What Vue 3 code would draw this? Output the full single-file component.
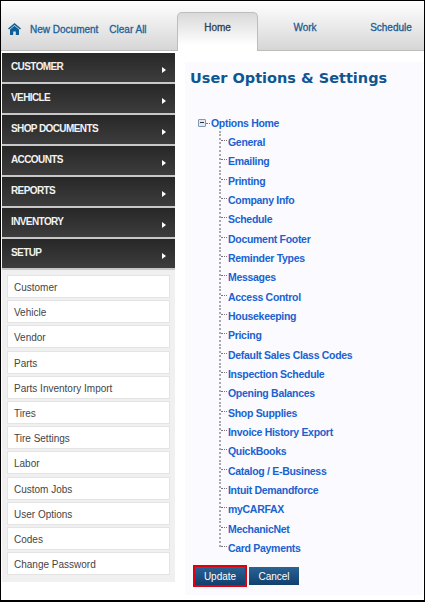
<template>
  <div class="frame">
    <header class="topbar">
      <div class="quick">
        <svg class="home-icon" width="13" height="12" viewBox="0 0 13 12">
          <path d="M6.5 0 L13 5.4 L12 6.4 L6.5 1.9 L1 6.4 L0 5.4 Z" fill="#0f5f96" />
          <path d="M2 6.4 L6.5 2.8 L11 6.4 V12 H7.8 V8.6 H5.2 V12 H2 Z" fill="#0f5f96" />
        </svg>
        <a class="quick-link">New Document</a>
        <a class="quick-link">Clear All</a>
      </div>
      <nav class="tabs">
        <a v-for="tab in tabs" :key="tab" class="tab" :class="[tab.toLowerCase(), { active: tab === 'Home' }]">{{ tab }}</a>
      </nav>
    </header>

    <div class="body">
      <aside class="sidebar">
        <div v-for="item in menu" :key="item" class="menu-item">
          <span>{{ item }}</span>
          <i class="arrow"></i>
        </div>
        <ul class="sublist">
          <li v-for="item in setupItems" :key="item">{{ item }}</li>
        </ul>
      </aside>

      <main class="content">
        <h1>User Options &amp; Settings</h1>
        <div class="tree-root">
          <span class="minus"></span>
          <span class="root-dash"></span>
          <a class="tree-link">Options Home</a>
        </div>
        <ul class="tree">
          <li v-for="item in options" :key="item"><a class="tree-link">{{ item }}</a></li>
        </ul>
        <div class="actions">
          <span class="highlight"><button>Update</button></span>
          <button>Cancel</button>
        </div>
      </main>
    </div>
  </div>
</template>

<script setup>
const tabs = ["Home", "Work", "Schedule"];

const menu = ["CUSTOMER", "VEHICLE", "SHOP DOCUMENTS", "ACCOUNTS", "REPORTS", "INVENTORY", "SETUP"];

const setupItems = [
  "Customer", "Vehicle", "Vendor", "Parts", "Parts Inventory Import", "Tires",
  "Tire Settings", "Labor", "Custom Jobs", "User Options", "Codes", "Change Password"
];

const options = [
  "General", "Emailing", "Printing", "Company Info", "Schedule", "Document Footer",
  "Reminder Types", "Messages", "Access Control", "Housekeeping", "Pricing",
  "Default Sales Class Codes", "Inspection Schedule", "Opening Balances", "Shop Supplies",
  "Invoice History Export", "QuickBooks", "Catalog / E-Business", "Intuit Demandforce",
  "myCARFAX", "MechanicNet", "Card Payments"
];
</script>

<style>
html, body {
  margin: 0;
  background: #fff;
}
</style>

<style scoped>
.frame {
  box-sizing: border-box;
  width: 425px;
  height: 602px;
  border: 1px solid #000;
  border-width: 1px 1px 2px 1px;
  background: #fff;
  font-family: "Liberation Sans", Arial, sans-serif;
  overflow: hidden;
}

.topbar {
  display: flex;
  height: 49px;
  background: linear-gradient(#ffffff, #d6d6d6);
  border-bottom: 1px solid #bdbdbd;
}

.quick {
  display: flex;
  flex-shrink: 0;
  align-items: center;
  width: 176px;
  padding: 7px 0 0 7px;
  box-sizing: border-box;
}

.home-icon {
  margin-right: 9px;
  margin-top: -1px;
}

.quick-link {
  margin-right: 11px;
  font-size: 10px;
  -webkit-text-stroke: 0.3px #1c6198;
  color: #1c6198;
  white-space: nowrap;
}

.tabs {
  display: flex;
  flex-shrink: 0;
  align-items: flex-end;
  margin-bottom: -1px;
}

.tab {
  display: flex;
  align-items: center;
  justify-content: center;
  box-sizing: border-box;
  height: 39px;
  padding-bottom: 9px;
  font-size: 10px;
  -webkit-text-stroke: 0.3px #1c5c92;
  color: #1c5c92;
}

.tab.active {
  width: 81px;
  color: #2f3f50;
  -webkit-text-stroke: 0.3px #2f3f50;
  background: linear-gradient(#d9d9d9, #ffffff 85%);
  border: 1px solid #bdbdbd;
  border-bottom: none;
  border-radius: 5px 5px 0 0;
}

.tab.work {
  width: 94px;
}

.tab.schedule {
  width: 78px;
}

.body {
  display: flex;
  padding-top: 2px;
}

.sidebar {
  flex-shrink: 0;
  width: 173px;
  margin-left: 1px;
}

.menu-item {
  position: relative;
  box-sizing: border-box;
  height: 31px;
  padding: 7px 0 0 9px;
  background: linear-gradient(#272727, #3d3d3d);
  border-bottom: 2px solid #c8c8c8;
  font-size: 10px;
  letter-spacing: -0.6px;
  font-weight: bold;
  line-height: 13px;
  color: #f2f2f2;
}

.arrow {
  position: absolute;
  top: 14px;
  right: 9px;
  width: 0;
  height: 0;
  border-left: 4px solid #fff;
  border-top: 3px solid transparent;
  border-bottom: 3px solid transparent;
}

.sublist {
  display: flex;
  flex-direction: column;
  gap: 2.2px;
  height: 312px;
  margin: 0;
  padding: 5px 5px 0;
  box-sizing: border-box;
  list-style: none;
  background: #f0f0f0;
}

.sublist li {
  box-sizing: border-box;
  height: 23px;
  padding-left: 6px;
  background: #fff;
  border: 1px solid #e4e4e4;
  font-size: 10px;
  line-height: 23px;
  color: #444;
}

.content {
  width: 238px;
  height: 533px;
  margin: 9px 0 0 10px;
  padding: 6px 0 0 5px;
  box-sizing: border-box;
  background: #fbfbff;
}

h1 {
  margin: 0 0 28px;
  font-family: "DejaVu Sans", Verdana, sans-serif;
  font-size: 14.5px;
  font-weight: bold;
  line-height: 20px;
  color: #0f5690;
}

.tree-root {
  display: flex;
  align-items: center;
  height: 14px;
  margin-left: 8px;
}

.minus {
  position: relative;
  box-sizing: border-box;
  width: 8px;
  height: 8px;
  background: #e4e8ec;
  border: 1px solid #7c9ab5;
  border-radius: 1px;
}

.minus::after {
  content: "";
  position: absolute;
  left: 1px;
  right: 1px;
  top: 2px;
  height: 1px;
  background: #333;
}

.root-dash {
  width: 4px;
  border-top: 1px dotted #777;
  margin-right: 1px;
}

.tree-link {
  font-size: 10.5px;
  letter-spacing: -0.3px;
  font-weight: bold;
  color: #1a62d0;
  white-space: nowrap;
}

.tree {
  margin: 1px 0 0 29px;
  padding: 0;
  list-style: none;
}

.tree li {
  position: relative;
  height: 19.33px;
  padding-left: 9px;
  line-height: 19px;
}

.tree li::before {
  content: "";
  position: absolute;
  left: 0;
  top: 0;
  bottom: 2px;
  border-left: 2px dotted #aaa;
}

.tree li:last-child::before {
  bottom: 9px;
}

.tree li::after {
  content: "";
  position: absolute;
  left: 2px;
  top: 9px;
  width: 6px;
  border-top: 1px dotted #777;
}

.actions {
  display: flex;
  align-items: center;
  gap: 2px;
  margin: 9px 0 0 3px;
}

.highlight {
  display: flex;
  border: 2px solid #e0000f;
}

button {
  box-sizing: border-box;
  width: 50px;
  height: 18px;
  padding: 0;
  border: none;
  background: linear-gradient(#2a6394, #123f6e);
  font-family: inherit;
  font-size: 10px;
  color: #fff;
}
</style>
